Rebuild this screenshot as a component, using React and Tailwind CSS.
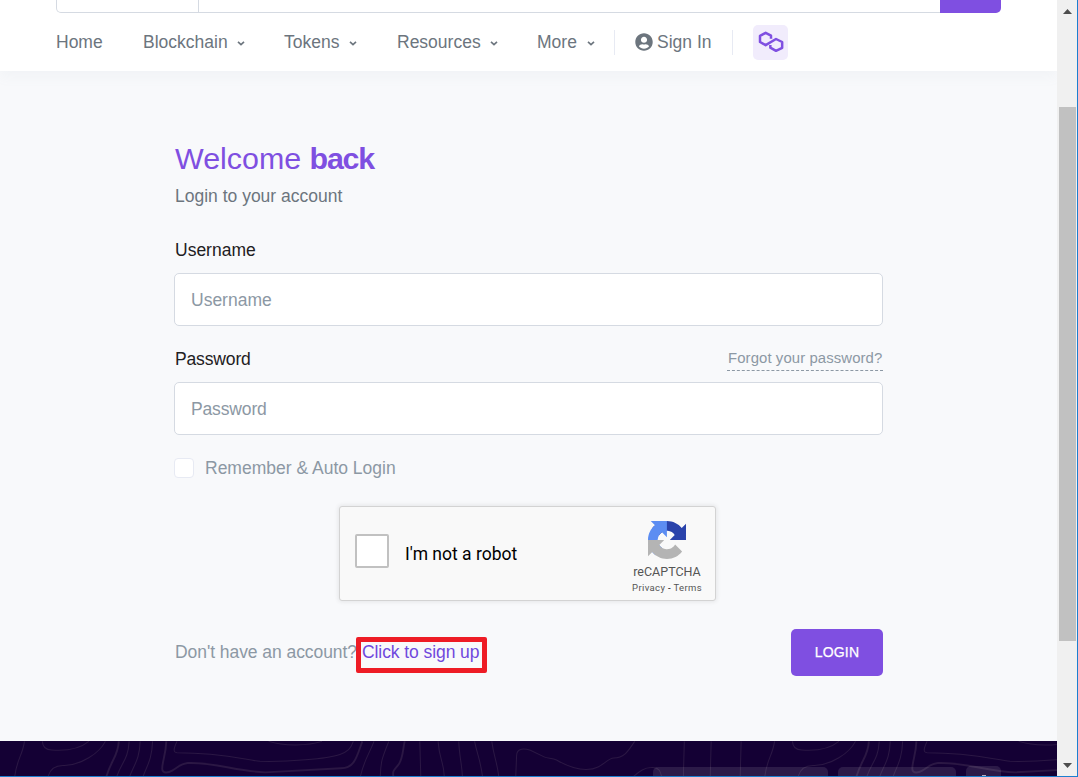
import React from 'react';
import { FaUserCircle } from 'react-icons/fa';

function Chevron() {
  return (
    <svg className="mt-[3px] h-[5px] w-[8px]" viewBox="0 0 8 5" fill="none" stroke="#6c757e" strokeWidth="1.6">
      <path d="M1 .8 4 3.7 7 .8" />
    </svg>
  );
}

function NavItem({ label, width }) {
  return (
    <a className={`flex shrink-0 items-center justify-between ${width}`}>
      <span className="whitespace-nowrap pt-px">{label}</span>
      <Chevron />
    </a>
  );
}

function Header() {
  return (
    <header className="relative z-10 h-[71px] shrink-0 bg-white shadow-[0_6px_12px_rgba(140,152,164,0.06)]">
      <div className="ml-[56px] flex h-[13px] w-[945px]">
        <div className="w-[143px] rounded-bl-[5px] border-b border-l border-r border-[#d5dae2]" />
        <div className="flex-1 border-b border-[#d5dae2]" />
        <div className="w-[61px] rounded-br-[5px] bg-[#7f4fe1]" />
      </div>
      <nav className="ml-[56px] flex h-[58px] items-center text-[17.5px] text-[#6c757e]">
        <a className="w-[87px] pt-px">Home</a>
        <NavItem label="Blockchain" width="w-[102px]" />
        <div className="w-[39px]" />
        <NavItem label="Tokens" width="w-[73px]" />
        <div className="w-[40px]" />
        <NavItem label="Resources" width="w-[101px]" />
        <div className="w-[39px]" />
        <NavItem label="More" width="w-[58px]" />
        <div className="ml-[19px] h-[25px] w-px bg-[#e7eaf3]" />
        <a className="ml-[20px] flex items-center whitespace-nowrap">
          <FaUserCircle className="mr-[4px] h-[18px] w-[18px]" />
          <span className="w-[55px] pt-px">Sign In</span>
        </a>
        <div className="ml-[20px] h-[25px] w-px bg-[#e7eaf3]" />
        <div className="ml-[20px] h-[35px] w-[35px] rounded-[5px] bg-[#f1ecfc]">
          <svg className="h-[35px] w-[35px]" viewBox="54 30 105 105" fill="none" stroke="#7f4fe1" strokeWidth="7.5" strokeLinejoin="round">
            <path d="M108 71V62L92 53.500 75 62.500V81L92 90.500 123 72 141.500 81V98.500L123 107.500 106 98V90" />
          </svg>
        </div>
      </nav>
    </header>
  );
}

function Captcha() {
  return (
    <div className="ml-[165px] mt-[26px] flex h-[95px] w-[377px] rounded-[3px] border border-[#d3d3d3] bg-[#f9f9f9] font-[Roboto,sans-serif] shadow-[0_0_4px_1px_rgba(0,0,0,0.08)]">
      <div className="ml-[15px] mt-[27px] h-[34px] w-[34px] rounded-[2px] border-2 border-[#c1c1c1] bg-white" />
      <div className="ml-[16px] mt-[35px] w-[213px] text-[17.5px] leading-[24px] text-black">I'm not a robot</div>
      <div className="mt-[14px] flex w-[96px] shrink-0 flex-col items-center text-[#555]">
        <svg className="ml-[2px] h-[38px] w-[38px]" viewBox="0 0 64 64">
          <path fill="#2a43ab" d="M64 31.955l-.033-1.37V4.687l-7.16 7.16C50.948 4.674 42.033.093 32.05.093c-10.4 0-19.622 4.96-25.458 12.64l11.736 11.86a15.55 15.55 0 0 1 4.754-5.334c2.05-1.6 4.952-2.906 8.968-2.906.485 0 .86.057 1.135.163 4.976.393 9.288 3.14 11.828 7.124l-8.307 8.307L64 31.953" />
          <path fill="#5c8df2" d="M31.862.094l-1.37.033H4.594l7.16 7.16C4.58 13.147 0 22.06 0 32.046c0 10.4 4.96 19.622 12.64 25.458L24.5 45.768a15.55 15.55 0 0 1-5.334-4.754c-1.6-2.05-2.906-4.952-2.906-8.968 0-.485.057-.86.163-1.135.393-4.976 3.14-9.288 7.124-11.828l8.307 8.307L31.86.095" />
          <path fill="#b4b4b4" d="M.001 32.045l.033 1.37v25.898l7.16-7.16c5.86 7.173 14.774 11.754 24.76 11.754 10.4 0 19.622-4.96 25.458-12.64l-11.736-11.86a15.55 15.55 0 0 1-4.754 5.334c-2.05 1.6-4.952 2.906-8.968 2.906-.485 0-.86-.057-1.135-.163-4.976-.393-9.288-3.14-11.828-7.124l8.307-8.307c-10.522.04-22.4.066-27.295-.005" />
        </svg>
        <div className="ml-[2px] mt-[6px] text-[12.5px] leading-[14px]">reCAPTCHA</div>
        <div className="ml-[2px] mt-[4px] whitespace-pre text-[9.5px] leading-[10px] tracking-[0.35px]">Privacy<span className="text-black"> - </span>Terms</div>
      </div>
    </div>
  );
}

function LoginForm() {
  return (
    <main className="flex h-[670px] shrink-0 flex-col bg-[#f8f9fb] pl-[174px] pt-[69px] text-[17.5px]">
      <h1 className="h-[36px] whitespace-nowrap pl-px text-[30.4px] leading-[36px] text-[#7f4fe1]">
        Welcome <b className="tracking-[-1.2px]">back</b>
      </h1>
      <p className="mt-[8px] pl-px leading-[24px] text-[#6c757e]">Login to your account</p>
      <label className="mt-[30px] pl-px leading-[24px] text-[#1e2022]">Username</label>
      <div className="mt-[11px] flex h-[53px] w-[709px] items-center rounded-[5px] border border-[#d5dae2] bg-white pl-[16px] pt-px text-[#8c98a4]">Username</div>
      <div className="mt-[21px] flex h-[24px] w-[709px] justify-between">
        <label className="pl-px leading-[24px] tracking-[-0.15px] text-[#1e2022]">Password</label>
        <a className="h-[24px] w-[156px] whitespace-nowrap border-b border-dashed border-[#8c98a4] pl-px text-[14.9px] leading-[23px] tracking-[0.1px] text-[#8c98a4]">Forgot your password?</a>
      </div>
      <div className="mt-[11px] flex h-[53px] w-[709px] items-center rounded-[5px] border border-[#d5dae2] bg-white pl-[16px] pt-px tracking-[-0.15px] text-[#8c98a4]">Password</div>
      <div className="mt-[21px] flex h-[24px] items-center text-[#8c98a4]">
        <span className="mr-[11px] h-[20px] w-[20px] rounded-[4px] border border-[#e7eaf3] bg-white" />
        Remember &amp; Auto Login
      </div>
      <Captcha />
      <div className="mt-[28px] flex h-[47px] w-[709px] items-center text-[#8c98a4]">
        <span className="w-[188px] whitespace-nowrap pl-px tracking-[-0.06px]">Don't have an account?</span>
        <a className="relative whitespace-nowrap tracking-[-0.08px] text-[#7048dd]">
          Click to sign up
          <span className="absolute -left-[6px] -top-[2px] h-[36px] w-[131px] rounded-[2px] border-[5px] border-[#ee1c25]" />
        </a>
        <button className="ml-auto h-[47px] w-[92px] rounded-[5px] bg-[#7f4fe1] text-[14px] tracking-[0.2px] text-white [-webkit-text-stroke:0.25px_white]">LOGIN</button>
      </div>
    </main>
  );
}

function Contours() {
  return (
    <>
      <path d="M71 33C66 75 42 95 42 150M123 33C124 50 132 58 150 58C205 62 235 52 258 33M306 33C288 68 235 102 187 103C155 101 142 120 138 142M375 33C372 90 350 95 337 142M407 33C405 90 388 100 374 142M443 33C441 90 425 105 413 142M514 33C505 52 501 65 514 66C650 66 715 88 755 91C835 93 950 84 987 71C1010 63 1018 55 1026 33M780 33C825 48 895 46 935 33M1086 33C1070 75 1055 90 1045 142M1129 33C1110 80 1105 90 1104 142M1219 33 1222 142M1272 33C1276 90 1291 95 1290 142M1332 33C1334 80 1342 100 1343 142M1378 33C1388 80 1396 90 1402 142M1428 33C1435 85 1445 95 1449 142" strokeWidth="3" />
      <path d="M345 33C342 80 322 85 307 142M483 33C481 75 471 90 471 113C472 128 490 124 500 118C520 106 525 98 545 96C615 92 690 120 770 123L990 111C1030 111 1036 78 1052 33M1175 33C1169 60 1170 85 1156 102C1145 115 1137 119 1144 142" strokeWidth="5.5" />
      <path d="M1497 148 1500 75C1500 50 1525 54 1540 59L1580 78C1590 83 1603 81 1616 87C1650 107 1675 115 1703 114.500C1750 114 1760 82 1782 81C1810 81 1820 68 1843 33M1987 33 1984 148M2065 33 2062 148M2152 33 2149 148M1823 148C1850 128 1865 109 1891 109C1920 106 1919 130 1924 148" strokeWidth="3" />
    </>
  );
}

function Footer() {
  return (
    <footer className="relative h-[35px] shrink-0 overflow-hidden bg-[#140034]">
      <svg className="absolute left-0 top-0 h-[35px] w-[1057px]" viewBox="0 0 1057 35" fill="none" stroke="#2b1744">
        <g transform="translate(0 -11) scale(.34439)">
          <Contours />
          <g transform="translate(2178 0)"><Contours /></g>
        </g>
      </svg>
      <div className="relative ml-[653px] flex items-end gap-[10px]">
        <div className="mt-[26px] h-[9px] w-[175px] rounded-t-[5px] bg-white/10" />
        <div className="h-[9px] w-[118px] rounded-t-[5px] bg-white/10" />
        <div className="flex h-[10px] w-[35px] items-end justify-center rounded-t-[5px] bg-white/10">
          <div className="h-px w-[4px] bg-[#b5adc0]" />
        </div>
      </div>
    </footer>
  );
}

function Scrollbar() {
  return (
    <aside className="flex w-[20px] shrink-0 flex-col items-center bg-[#f0f0f0]">
      <svg className="mt-[9px] h-[5px] w-[9px]" viewBox="0 0 9 5"><path d="M0 5 4.500 0 9 5Z" fill="#4d4d4d" /></svg>
      <div className="mt-[93px] h-[534px] w-[17px] bg-[#c1c1c1]" />
      <svg className="mt-[122px] h-[5px] w-[9px]" viewBox="0 0 9 5"><path d="M0 0H9L4.500 5Z" fill="#4d4d4d" /></svg>
    </aside>
  );
}

export default function App() {
  return (
    <div className="flex h-[777px] w-[1078px] overflow-hidden border-b border-r border-[#1c7fd0] font-['Liberation_Sans',Arial,sans-serif]">
      <div className="flex w-[1057px] shrink-0 flex-col overflow-hidden">
        <Header />
        <LoginForm />
        <Footer />
      </div>
      <Scrollbar />
    </div>
  );
}
